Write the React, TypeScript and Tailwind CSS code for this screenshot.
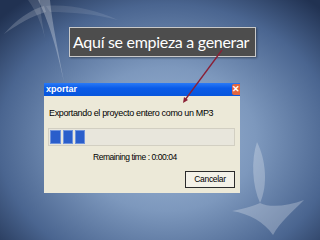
import React from 'react'

function Decor() {
    return (
        <svg className="absolute inset-0" width="320" height="240" viewBox="0 0 320 240">
            {/* upper left swoosh */}
            <path d="M38 0 C48 20 56 45 64 82 C58 50 52 22 50 0 Z" fill="#ffffff" opacity="0.28" />
            <path d="M28 0 C38 14 44 30 47 48 C43 28 40 12 40 0 Z" fill="#ffffff" opacity="0.12" />
            <path d="M44 6 C30 10 16 20 4 34 C18 24 32 16 46 12 Z" fill="#ffffff" opacity="0.18" />
            <path d="M46 6 C70 4 96 10 118 20 C96 14 70 12 50 12 Z" fill="#ffffff" opacity="0.1" />
            {/* lower right star */}
            <path d="M257 142 C266 160 268 185 260 203 C252 185 251 160 257 142 Z" fill="#ffffff" opacity="0.25" />
            <path d="M232 211 C246 208 254 206 260 203 C270 208 288 206 304 200 C292 212 280 222 273 235 C264 222 250 214 232 211 Z" fill="#ffffff" opacity="0.25" />
        </svg>
    )
}

function Arrow() {
    return (
        <svg className="absolute inset-0 pointer-events-none" width="320" height="240" viewBox="0 0 320 240">
            <line x1="222" y1="50" x2="185" y2="100" stroke="#8a1f35" strokeWidth="1.3" />
            <path d="M183 103 L184 97 L188 100 Z" fill="#8a1f35" />
        </svg>
    )
}

export default function App() {
    return (
        <div className="relative w-[320px] h-[240px] overflow-hidden bg-[radial-gradient(ellipse_70%_75%_at_52%_58%,#9db6d6_0%,#7d98bd_40%,#4a6590_75%,#213252_100%)]">
            <Decor />

            <div className="relative flex flex-col pt-[27px]">
                <div className="ml-[69px] w-[187px] h-[30px] flex items-center pl-[3px] bg-[#4d4d4d] border border-[#c9c9c9] shadow-[1px_1px_2px_rgba(0,0,0,0.4)]">
                    <span className="text-white text-[16px] tracking-[-0.3px] leading-none whitespace-nowrap" style={{ fontFamily: 'Lato, "Open Sans", sans-serif' }}>
                        Aquí se empieza a generar
                    </span>
                </div>

                <div className="ml-[44px] mt-[26px] w-[196px] h-[110px] flex flex-col bg-[#ece9d8]" style={{ fontFamily: '"Liberation Sans", Arial, sans-serif' }}>
                    <div className="h-[13px] flex items-center justify-between bg-[linear-gradient(#2a7af6,#0a5be8_40%,#0756dc)]">
                        <span className="pl-[2px] text-white font-bold text-[9px] leading-none">xportar</span>
                        <div className="w-[8px] h-[11px] bg-[#e2663f] rounded-l-[2px] flex items-center justify-end text-white text-[9px] font-bold leading-none">
                            ✕
                        </div>
                    </div>

                    <div className="flex flex-col px-[4px]">
                        <div className="mt-[13px] pl-[1px] text-[9px] leading-none text-black tracking-[-0.35px] whitespace-nowrap">
                            Exportando el proyecto entero como un MP3
                        </div>

                        <div className="mt-[10px] w-[187px] h-[18px] border border-[#d2cfc2] bg-[#e8e6dc] flex gap-[2px] p-[1px]">
                            <div className="w-[11px] h-full bg-[#2a5ecb] border border-[#6f93dc]" />
                            <div className="w-[10px] h-full bg-[#2a5ecb] border border-[#6f93dc]" />
                            <div className="w-[10px] h-full bg-[#2a5ecb] border border-[#6f93dc]" />
                        </div>

                        <div className="mt-[7px] pl-[45px] text-[8.5px] leading-none text-black tracking-[-0.45px] whitespace-nowrap">
                            Remaining time : 0:00:04
                        </div>

                        <div className="mt-[9px] self-end mr-[1px] w-[50px] h-[17px] border border-[#2b2b2b] bg-[#f3f1e8] flex items-center justify-center text-[8.5px] leading-none text-black tracking-[-0.3px]">
                            Cancelar
                        </div>
                    </div>
                </div>
            </div>

            <Arrow />
        </div>
    )
}
